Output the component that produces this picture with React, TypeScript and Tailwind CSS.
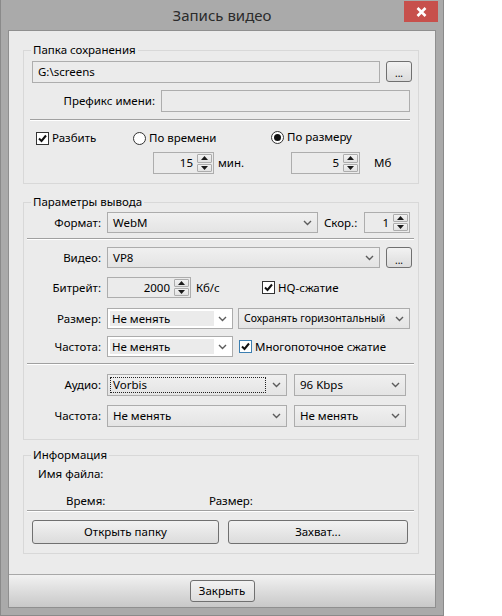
import type { ReactNode } from "react";

const FONT = "font-['Noto_Sans',_'DejaVu_Sans',_sans-serif]";

function Chevron() {
  return (
    <svg width="9" height="6" viewBox="0 0 9 6" className="shrink-0">
      <polyline points="1,1 4.5,4.5 8,1" fill="none" stroke="#5c5c5c" strokeWidth="1.4" />
    </svg>
  );
}

function Edit({ w, h = 22, children }: { w: number; h?: number; children?: ReactNode }) {
  return (
    <div
      className="flex shrink-0 items-center border border-[#adadad] bg-[#ebebeb] pl-[5px]"
      style={{ width: w, height: h }}
    >
      {children}
    </div>
  );
}

function SpinArrow({ up }: { up?: boolean }) {
  return (
    <svg width="7" height="4" viewBox="0 0 7 4">
      <polygon points={up ? "0,4 7,4 3.5,0" : "0,0 7,0 3.5,4"} fill="#1a1a1a" />
    </svg>
  );
}

function Spin({ w, h = 22, value }: { w: number; h?: number; value: string }) {
  return (
    <div
      className="flex shrink-0 items-stretch border border-[#adadad] bg-[#ebebeb]"
      style={{ width: w, height: h }}
    >
      <div className="flex flex-1 items-center justify-end pr-[4px]">{value}</div>
      <div className="flex w-[16px] flex-col gap-[1px] py-[1px] pr-[1px]">
        <div className="flex flex-1 items-center justify-center rounded-[1px] border border-[#acacac] bg-gradient-to-b from-[#f2f2f2] to-[#e2e2e2]">
          <SpinArrow up />
        </div>
        <div className="flex flex-1 items-center justify-center rounded-[1px] border border-[#acacac] bg-gradient-to-b from-[#f2f2f2] to-[#e2e2e2]">
          <SpinArrow />
        </div>
      </div>
    </div>
  );
}

function Combo({
  w,
  h = 21,
  text,
  focus,
  small,
}: {
  w: number;
  h?: number;
  text: string;
  focus?: boolean;
  small?: boolean;
}) {
  return (
    <div
      className="flex shrink-0 items-center border border-[#acacac] bg-gradient-to-b from-[#f0f0f0] to-[#e4e4e4] pr-[5px]"
      style={{ width: w, height: h }}
    >
      <div className="flex min-w-0 flex-1 items-center self-stretch p-[2px]">
        <div
          className={`flex h-full flex-1 items-center overflow-hidden whitespace-nowrap pl-[2px] ${
            focus ? "border border-dotted border-[#222]" : "border border-transparent"
          } ${small ? "text-[10.5px]" : ""}`}
        >
          {text}
        </div>
      </div>
      <div className="ml-[4px]">
        <Chevron />
      </div>
    </div>
  );
}

function WhiteCombo({ w, text }: { w: number; text: string }) {
  return (
    <div
      className="flex h-[21px] shrink-0 items-center border border-[#acacac] bg-white pr-[5px]"
      style={{ width: w }}
    >
      <div className="ml-[2px] flex h-[15px] w-[104px] items-center bg-[#ebebeb] pl-[2px]">{text}</div>
      <div className="flex flex-1 justify-end">
        <Chevron />
      </div>
    </div>
  );
}

function Btn({ w, h, children }: { w: number; h: number; children: ReactNode }) {
  return (
    <div
      className="flex shrink-0 items-center justify-center rounded-[3px] border border-[#707070] bg-gradient-to-b from-[#f2f2f2] to-[#dcdcdc]"
      style={{ width: w, height: h }}
    >
      {children}
    </div>
  );
}

function DotsBtn() {
  return (
    <Btn w={26} h={21}>
      <span className="mt-[4px] text-[10px] leading-none">...</span>
    </Btn>
  );
}

function Check({ label, focus }: { label: string; focus?: boolean }) {
  return (
    <div className="flex items-center">
      <div
        className={`flex h-[13px] w-[13px] items-center justify-center border bg-white ${
          focus ? "border-[#3c7fb1]" : "border-[#333]"
        }`}
      >
        <svg width="9" height="9" viewBox="0 0 9 9">
          <polyline points="1,4.5 3.5,7 8,1.5" fill="none" stroke="#111" strokeWidth="2" />
        </svg>
      </div>
      <span className="ml-[3px] whitespace-nowrap">{label}</span>
    </div>
  );
}

function Radio({ label, checked }: { label: string; checked?: boolean }) {
  return (
    <div className="flex items-center">
      <div className="flex h-[13px] w-[13px] items-center justify-center rounded-full border border-[#333] bg-white">
        {checked ? <div className="h-[7px] w-[7px] rounded-full bg-[#111]" /> : null}
      </div>
      <span className="ml-[3px]">{label}</span>
    </div>
  );
}

function Sep({ ml, w, mt }: { ml: number; w: number; mt: number }) {
  return (
    <div className="h-[2px] border-t border-[#a0a0a0] bg-white" style={{ marginLeft: ml, width: w, marginTop: mt }} />
  );
}

function Group({ title, children, pb }: { title: string; children: ReactNode; pb: number }) {
  return (
    <fieldset
      className="ml-[14px] w-[396px] border border-[#d8d8d8] px-0"
      style={{ paddingBottom: pb }}
    >
      <legend className="ml-[7px] h-[16px] px-[2px] leading-[16px]">{title}</legend>
      {children}
    </fieldset>
  );
}

function Label({ w, children }: { w: number; children: ReactNode }) {
  return (
    <div className="shrink-0 pr-[6px] text-right" style={{ width: w }}>
      {children}
    </div>
  );
}

export default function App() {
  return (
    <div className={`h-[616px] w-[502px] bg-white text-[11.5px] text-black ${FONT}`}>
      <div className="flex h-[616px] w-[444px] flex-col border-x border-b border-[#8a8a8a] bg-[#aaaaaa]">
        <div className="relative flex h-[30px] shrink-0 items-center justify-center">
          <span className="text-[15px] text-[#2b2b2b]">Запись видео</span>
          <div className="absolute right-[5px] top-[1px] flex h-[21px] w-[34px] items-center justify-center bg-[#c7504c]">
            <svg width="11" height="10" viewBox="0 0 11 10">
              <path d="M1.5 1 L9.5 9 M9.5 1 L1.5 9" stroke="#fff" strokeWidth="2.6" />
            </svg>
          </div>
        </div>

        <div className="mx-[7px] flex h-[578px] flex-col border border-[#8f8f8f] bg-[#ebebeb]">
          <div className="flex flex-1 flex-col pt-[11px]">
            <Group title="Папка сохранения" pb={9}>
              <div className="ml-[8px] mt-[3px] flex h-[22px] items-center">
                <Edit w={348}>G:\screens</Edit>
                <div className="ml-[6px] -mt-[2px]">
                  <DotsBtn />
                </div>
              </div>
              <div className="mt-[7px] flex h-[22px] items-center">
                <Label w={137}>Префикс имени:</Label>
                <Edit w={249} />
              </div>
              <Sep ml={6} w={380} mt={7} />
              <div className="mt-[9px] flex h-[16px] items-center">
                <div className="ml-[12px] w-[97px]">
                  <Check label="Разбить" />
                </div>
                <div className="w-[138px]">
                  <Radio label="По времени" />
                </div>
                <div className="-mt-[2px]">
                  <Radio label="По размеру" checked />
                </div>
              </div>
              <div className="mt-[6px] flex h-[22px] items-center">
                <div className="ml-[129px]">
                  <Spin w={61} value="15" />
                </div>
                <div className="w-[77px] pl-[4px]">мин.</div>
                <Spin w={69} value="5" />
                <div className="pl-[14px]">Мб</div>
              </div>
            </Group>

            <div className="mt-[10px]">
              <Group title="Параметры вывода" pb={12}>
                <div className="mt-[2px] flex h-[21px] items-center">
                  <Label w={83}>Формат:</Label>
                  <Combo w={211} text="WebM" />
                  <div className="ml-[6px] w-[40px]">Скор.:</div>
                  <Spin w={46} h={21} value="1" />
                </div>
                <Sep ml={3} w={387} mt={5} />
                <div className="mt-[7px] flex h-[21px] items-center">
                  <Label w={83}>Видео:</Label>
                  <Combo w={273} text="VP8" />
                  <div className="ml-[6px]">
                    <DotsBtn />
                  </div>
                </div>
                <div className="mt-[9px] flex h-[21px] items-center">
                  <Label w={83}>Битрейт:</Label>
                  <Spin w={84} h={21} value="2000" />
                  <div className="w-[71px] pl-[5px]">Кб/с</div>
                  <Check label="HQ-сжатие" />
                </div>
                <div className="mt-[10px] flex h-[21px] items-center">
                  <Label w={83}>Размер:</Label>
                  <WhiteCombo w={126} text="Не менять" />
                  <div className="ml-[5px]">
                    <Combo w={172} text="Сохранять горизонтальный" small />
                  </div>
                </div>
                <div className="mt-[7px] flex h-[21px] items-center">
                  <Label w={83}>Частота:</Label>
                  <WhiteCombo w={126} text="Не менять" />
                  <div className="ml-[6px]">
                    <Check label="Многопоточное сжатие" focus />
                  </div>
                </div>
                <Sep ml={3} w={387} mt={6} />
                <div className="mt-[9px] flex h-[22px] items-center">
                  <Label w={83}>Аудио:</Label>
                  <Combo w={180} h={22} text="Vorbis" focus />
                  <div className="ml-[7px]">
                    <Combo w={112} h={22} text="96 Kbps" />
                  </div>
                </div>
                <div className="mt-[9px] flex h-[22px] items-center">
                  <Label w={83}>Частота:</Label>
                  <Combo w={180} h={22} text="Не менять" />
                  <div className="ml-[7px]">
                    <Combo w={112} h={22} text="Не менять" />
                  </div>
                </div>
              </Group>
            </div>

            <div className="mt-[7px]">
              <Group title="Информация" pb={9}>
                <div className="ml-[14px] mt-[3px] flex h-[16px] items-center">Имя файла:</div>
                <div className="mt-[11px] flex h-[16px] items-center">
                  <div className="ml-[42px] w-[143px]">Время:</div>
                  <div>Размер:</div>
                </div>
                <Sep ml={3} w={387} mt={1} />
                <div className="ml-[8px] mt-[8px] flex h-[24px] items-center gap-[9px]">
                  <Btn w={187} h={24}>
                    Открыть папку
                  </Btn>
                  <Btn w={180} h={24}>
                    Захват...
                  </Btn>
                </div>
              </Group>
            </div>
          </div>

          <div className="flex h-[33px] shrink-0 items-center justify-center border-t border-[#a8a8a8] bg-gradient-to-b from-[#f2f2f2] to-[#c8c8c8]">
            <Btn w={65} h={22}>
              Закрыть
            </Btn>
          </div>
        </div>
      </div>
    </div>
  );
}
